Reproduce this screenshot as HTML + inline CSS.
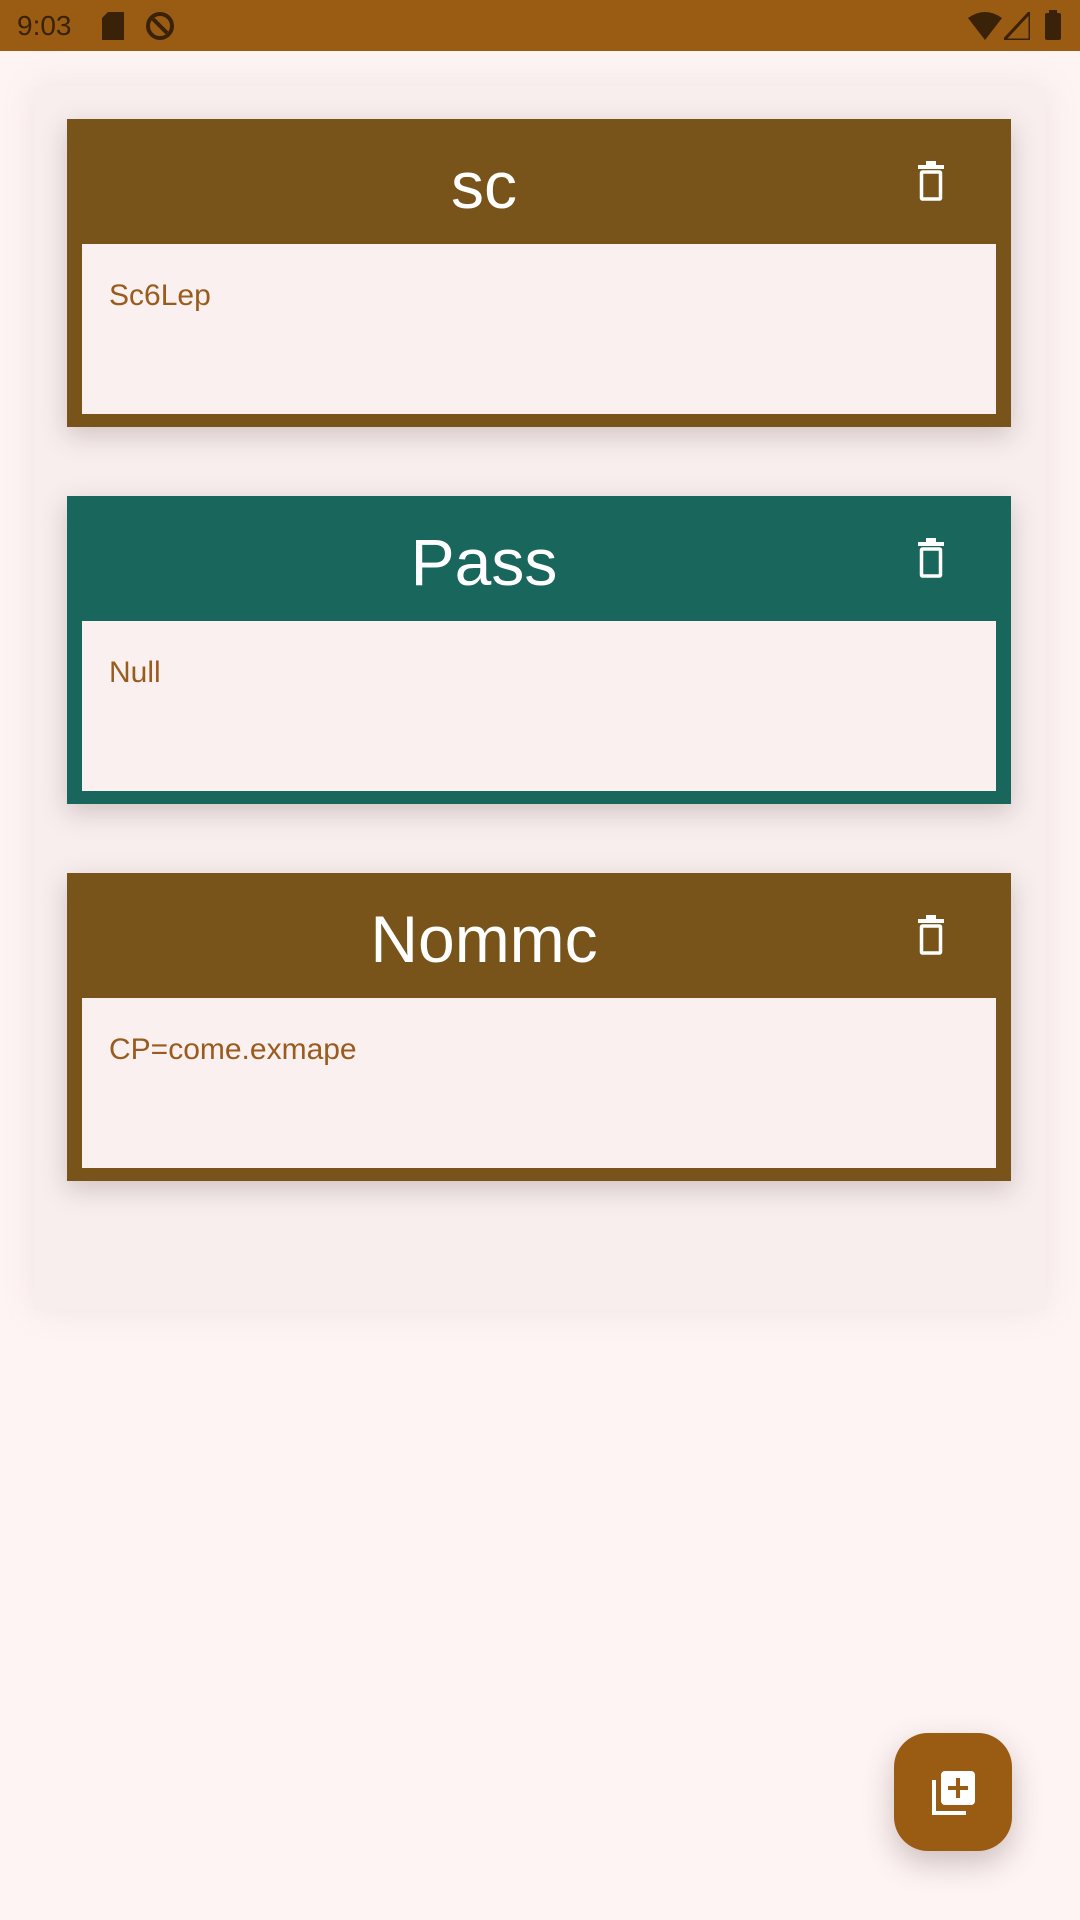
<!DOCTYPE html>
<html><head><meta charset="utf-8"><style>
*{margin:0;padding:0;box-sizing:border-box}
body{width:1080px;height:1920px;background:#fdf4f3;font-family:"Liberation Sans",sans-serif;position:relative;overflow:hidden}
.sb{position:absolute;left:0;top:0;width:1080px;height:51px;background:#9a5b12;color:#3a2208}
.sb .t{position:absolute;left:17px;top:10px;font-size:28px}
.wrap{position:absolute;left:34px;top:86px;width:1012px;height:1224px;background:#f7eeed;box-shadow:0 0 30px rgba(180,150,150,.15)}
.card{position:absolute;left:67px;width:944px;height:308px;background:#78541a;box-shadow:0 8px 24px rgba(100,70,70,.25)}
.card .h{position:absolute;left:0;top:4px;width:944px;height:125px;color:#fff;font-size:66px;text-align:center;line-height:125px;padding-right:110px}
.card .b{position:absolute;left:15px;top:125px;width:914px;height:170px;background:#f9f0ef;color:#9a5b1e;font-size:30px;padding:35px 0 0 27px}
.tr{position:absolute;left:850px;top:42px}
.fab{position:absolute;left:894px;top:1733px;width:118px;height:118px;border-radius:34px;background:#9a5b12;box-shadow:0 12px 30px rgba(100,70,70,.3)}
</style></head><body>
<div class="sb"><span class="t">9:03</span>
<svg style="position:absolute;left:102px;top:12px" width="22" height="28"><path d="M6 0h16v28H0V6z" fill="#3a2208"/></svg>
<svg style="position:absolute;left:145px;top:11px" width="30" height="30"><circle cx="15" cy="15" r="12" fill="none" stroke="#3a2208" stroke-width="4"/><path d="M8 8l14 14" stroke="#3a2208" stroke-width="4"/></svg>
<svg style="position:absolute;left:968px;top:12px" width="34" height="28"><path d="M0 6Q17-6 34 6L17 28z" fill="#3a2208"/></svg>
<svg style="position:absolute;left:1004px;top:12px" width="26" height="28"><path d="M26 0V28H0z" fill="none" stroke="#3a2208" stroke-width="3"/></svg>
<svg style="position:absolute;left:1045px;top:10px" width="16" height="30"><rect x="4" y="0" width="8" height="4" fill="#3a2208"/><rect x="0" y="3" width="16" height="27" rx="2" fill="#3a2208"/></svg>
</div>
<div class="wrap"></div>
<div class="card" style="top:119px"><div class="h">sc</div>
<svg class="tr" width="28" height="40" viewBox="0 0 28 40"><rect x="9" y="0" width="10" height="4" fill="#fff"/><rect x="1" y="4" width="26" height="4" fill="#fff"/><rect x="4.5" y="11" width="19" height="27" rx="1" fill="none" stroke="#fff" stroke-width="3.5"/></svg>
<div class="b">Sc6Lep</div></div>
<div class="card" style="top:496px;background:#18665c"><div class="h">Pass</div>
<svg class="tr" width="28" height="40" viewBox="0 0 28 40"><rect x="9" y="0" width="10" height="4" fill="#fff"/><rect x="1" y="4" width="26" height="4" fill="#fff"/><rect x="4.5" y="11" width="19" height="27" rx="1" fill="none" stroke="#fff" stroke-width="3.5"/></svg>
<div class="b">Null</div></div>
<div class="card" style="top:873px"><div class="h">Nommc</div>
<svg class="tr" width="28" height="40" viewBox="0 0 28 40"><rect x="9" y="0" width="10" height="4" fill="#fff"/><rect x="1" y="4" width="26" height="4" fill="#fff"/><rect x="4.5" y="11" width="19" height="27" rx="1" fill="none" stroke="#fff" stroke-width="3.5"/></svg>
<div class="b">CP=come.exmape</div></div>
<div class="fab"><svg style="position:absolute;left:38px;top:38px" width="44" height="44" viewBox="0 0 44 44"><path d="M2 9V42H34" fill="none" stroke="#fff" stroke-width="4"/><rect x="9" y="0" width="34" height="34" rx="4" fill="#fff"/><path d="M26 7V27M16 17H36" stroke="#9a5b12" stroke-width="4"/></svg></div>
</body></html>
